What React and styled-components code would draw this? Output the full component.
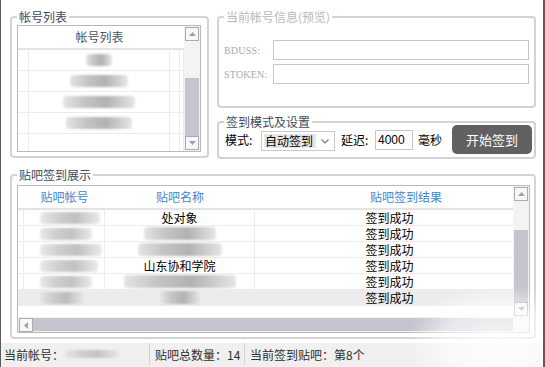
import React from "react"
import styled, { createGlobalStyle } from "styled-components"

const GlobalStyle = createGlobalStyle`
  html, body {
    margin: 0;
    padding: 0;
    background: #fff;
  }
  * {
    box-sizing: border-box;
  }
`

const Window = styled.div`
  position: relative;
  width: 545px;
  height: 367px;
  overflow: hidden;
  background: #fff;
  border-left: 1px solid #5c5c5c;
  border-right: 2px solid #5c5c5c;
  font-family: "Noto Sans CJK SC", "Liberation Sans", sans-serif;
  font-size: 12px;
  color: #111;
`

const Body = styled.div`
  padding: 10px 0 0 9px;
`

const TopRow = styled.div`
  display: flex;
  align-items: flex-start;
`

const RightCol = styled.div`
  display: flex;
  flex-direction: column;
  gap: 7px;
  margin-left: 8px;
`

const Group = styled.fieldset`
  margin: ${p => p.$mt || 0}px 0 0 0;
  padding: 0;
  min-width: 0;
  width: ${p => p.$w}px;
  height: ${p => p.$h}px;
  border: 2px solid #d3d3d3;
  border-radius: 4px;
`

const Legend = styled.legend`
  margin-left: 5px;
  padding: 0 2px;
  font-size: 12px;
  line-height: 14px;
  color: ${p => (p.$disabled ? "#b9b9b9" : "#3d4a5c")};
`

const ListView = styled.div`
  display: grid;
  grid-template-columns: 1fr 16px;
  grid-template-rows: ${p => (p.$hScroll ? "1fr 15px" : "1fr")};
  width: ${p => p.$w}px;
  height: ${p => p.$h}px;
  margin: ${p => p.$mt}px 0 0 5px;
  border: 1px solid #b9b9b9;
  background: #fff;
  overflow: hidden;
`

const TableArea = styled.div`
  overflow: hidden;
  min-width: 0;
`

const HeaderRow = styled.div`
  display: grid;
  grid-template-columns: ${p => p.$cols};
  height: 24px;
  border-bottom: 2px solid #e3e3e3;
`

const HeaderCell = styled.div`
  text-align: center;
  line-height: 22px;
  white-space: nowrap;
  color: ${p => (p.$blue ? "#4286d2" : "#4a5566")};
`

const Row = styled.div`
  display: grid;
  grid-template-columns: ${p => p.$cols};
  height: ${p => p.$h}px;
  border-bottom: 1px solid #ececec;
  background: ${p => (p.$active ? "#ececec" : "transparent")};
`

const Cell = styled.div`
  display: flex;
  align-items: center;
  justify-content: ${p => (p.$left ? "flex-start" : "center")};
  padding-left: ${p => p.$pl || 0}px;
  padding-right: ${p => p.$pr || 0}px;
  border-right: 1px solid #ececec;
  white-space: nowrap;
  overflow: hidden;
  line-height: 15px;
  color: #000;
`

const Blob = styled.span`
  display: inline-block;
  width: ${p => p.$w}px;
  height: ${p => p.$h || 11}px;
  border-radius: 4px;
  background: linear-gradient(90deg, #e4e4e4 0%, #c4c4c4 30%, #b2b2b2 60%, #e6e6e6 100%);
  filter: blur(1.2px);
  opacity: ${p => p.$o || 1};
`

const VScroll = styled.div`
  display: flex;
  flex-direction: column;
  padding: 1px 1px;
  background: #f2f2f2;
`

const HScroll = styled.div`
  display: flex;
  padding: 1px 0 1px 1px;
  background: #f2f2f2;
`

const Corner = styled.div`
  background: #f2f2f2;
`

const ArrowBtn = styled.div`
  flex: none;
  width: 14px;
  height: 14px;
  border: 1px solid #acacac;
  background: #f7f7f7;
  display: flex;
  align-items: center;
  justify-content: center;
`

const TrackGap = styled.div`
  flex: none;
  height: ${p => p.$h}px;
  background-image: linear-gradient(45deg, #f7f7f7 25%, transparent 25%, transparent 75%, #f7f7f7 75%);
  background-size: 2px 2px;
`

const Thumb = styled.div`
  flex: 1;
  background: #c5c5cf;
`

const InfoBody = styled.div`
  display: flex;
  flex-direction: column;
  gap: 4px;
  padding: 16px 0 0 5px;
`

const InfoRow = styled.div`
  display: flex;
  align-items: center;
  height: 20px;
`

const SerifLabel = styled.span`
  width: 49px;
  font-family: "Liberation Serif", "DejaVu Serif", serif;
  font-size: 10px;
  letter-spacing: 0.2px;
  color: #aaaaaa;
`

const TextBox = styled.div`
  width: ${p => p.$w}px;
  height: ${p => p.$h || 20}px;
  border: 1px solid #c6c6c6;
  background: #fff;
  padding-left: 2px;
  font-family: "Liberation Sans", sans-serif;
  font-size: 12px;
  line-height: ${p => (p.$h || 20) - 2}px;
  color: #000;
`

const SettingsRow = styled.div`
  display: flex;
  align-items: center;
  height: 29px;
  margin-top: -4px;
  padding-left: 6px;
`

const Label = styled.span`
  width: ${p => p.$w}px;
  margin-left: ${p => p.$ml || 0}px;
  flex: none;
  color: #000;
`

const Select = styled.div`
  display: flex;
  width: 74px;
  height: 20px;
  margin-top: 3px;
  border: 1px solid #c9c9c9;
  background: #fff;
`

const SelectValue = styled.div`
  flex: 1;
  margin: 2px 0 2px 2px;
  background: #e6e6e6;
  line-height: 14px;
  padding-left: 1px;
  color: #000;
`

const SelectArrow = styled.div`
  width: 18px;
  display: flex;
  align-items: center;
  justify-content: center;
`

const StartButton = styled.button`
  width: 80px;
  height: 29px;
  border: none;
  border-radius: 5px;
  background: #616161;
  color: #fff;
  font-family: "Noto Sans CJK SC", sans-serif;
  font-size: 13px;
  padding: 0;
`

const StatusBar = styled.div`
  display: flex;
  height: 24px;
  margin-top: 4px;
  background: #f0f0f0;
  color: #2e2e2e;
  font-size: 12px;
`

const StatusItem = styled.div`
  display: flex;
  align-items: center;
  width: ${p => (p.$w ? `${p.$w}px` : "auto")};
  padding-left: ${p => p.$pl}px;
  height: 22px;
  border-right: ${p => (p.$sep ? "1px solid #d4d4d4" : "none")};
  white-space: nowrap;
`

const Watermark = styled.div`
  position: absolute;
  right: 0;
  bottom: 0;
  width: 130px;
  height: 80px;
  background: radial-gradient(ellipse at 65% 70%, rgba(255,255,255,0.85) 0%, rgba(255,255,255,0.6) 45%, rgba(255,255,255,0) 75%);
  pointer-events: none;
`

const Tri = ({ dir }) => {
  const pts = {
    up: "0,4 3.5,0 7,4",
    down: "0,0 3.5,4 7,0",
    left: "4,0 0,3.5 4,7",
  }[dir]
  const vb = dir === "left" ? "0 0 4 7" : "0 0 7 4"
  return (
    <svg width={dir === "left" ? 4 : 7} height={dir === "left" ? 7 : 4} viewBox={vb}>
      <polygon points={pts} fill="#a2a2a2" />
    </svg>
  )
}

const Chevron = () => (
  <svg width="8" height="5" viewBox="0 0 8 5">
    <path d="M0.5 0.5 L4 4 L7.5 0.5" fill="none" stroke="#7a7a7a" strokeWidth="1.2" />
  </svg>
)

const accountCols = "11px 141px 10px 1fr"
const accounts = [26, 58, 72, 66, 0]

const tiebaCols = "6px 81px 150px 302px"
const tieba = [
  { acc: 60, name: "处对象" },
  { acc: 52, blur: 72 },
  { acc: 62, blur: 84 },
  { acc: 58, name: "山东协和学院" },
  { acc: 52, blur: 112 },
  { acc: 44, blur: 40, active: true },
]

export default function App() {
  return (
    <Window>
      <GlobalStyle />
      <Body>
        <TopRow>
          <Group $w={199} $h={148}>
            <Legend>帐号列表</Legend>
            <ListView $w={184} $h={127} $mt={1}>
              <TableArea>
                <HeaderRow $cols={accountCols}>
                  <HeaderCell />
                  <HeaderCell>帐号列表</HeaderCell>
                  <HeaderCell />
                  <HeaderCell />
                </HeaderRow>
                {accounts.map((w, i) => (
                  <Row key={i} $cols={accountCols} $h={21}>
                    <Cell />
                    <Cell>{w > 0 && <Blob $w={w} $h={12} />}</Cell>
                    <Cell />
                    <Cell />
                  </Row>
                ))}
              </TableArea>
              <VScroll>
                <ArrowBtn><Tri dir="up" /></ArrowBtn>
                <TrackGap $h={37} />
                <Thumb />
                <ArrowBtn><Tri dir="down" /></ArrowBtn>
              </VScroll>
            </ListView>
          </Group>

          <RightCol>
            <Group $w={319} $h={98}>
              <Legend $disabled>当前帐号信息(预览)</Legend>
              <InfoBody>
                <InfoRow>
                  <SerifLabel>BDUSS:</SerifLabel>
                  <TextBox $w={256} />
                </InfoRow>
                <InfoRow>
                  <SerifLabel>STOKEN:</SerifLabel>
                  <TextBox $w={256} />
                </InfoRow>
              </InfoBody>
            </Group>

            <Group $w={319} $h={44}>
              <Legend>签到模式及设置</Legend>
              <SettingsRow>
                <Label $w={36}>模式:</Label>
                <Select>
                  <SelectValue>自动签到</SelectValue>
                  <SelectArrow><Chevron /></SelectArrow>
                </Select>
                <Label $w={34} $ml={6}>延迟:</Label>
                <TextBox $w={38} $h={20}>4000</TextBox>
                <Label $w={34} $ml={5}>毫秒</Label>
                <StartButton>开始签到</StartButton>
              </SettingsRow>
            </Group>
          </RightCol>
        </TopRow>

        <Group $w={526} $h={171} $mt={9}>
          <Legend>贴吧签到展示</Legend>
          <ListView $w={513} $h={148} $mt={3} $hScroll>
            <TableArea>
              <HeaderRow $cols={tiebaCols}>
                <HeaderCell />
                <HeaderCell $blue>贴吧帐号</HeaderCell>
                <HeaderCell $blue>贴吧名称</HeaderCell>
                <HeaderCell $blue>贴吧签到结果</HeaderCell>
              </HeaderRow>
              {tieba.map((r, i) => (
                <Row key={i} $cols={tiebaCols} $h={16} $active={r.active}>
                  <Cell />
                  <Cell $left $pl={16}><Blob $w={r.acc} $h={12} $o={0.8} /></Cell>
                  <Cell>{r.name ? r.name : <Blob $w={r.blur} $h={13} />}</Cell>
                  <Cell $pr={32}>签到成功</Cell>
                </Row>
              ))}
            </TableArea>
            <VScroll>
              <ArrowBtn><Tri dir="up" /></ArrowBtn>
              <TrackGap $h={29} />
              <Thumb />
              <ArrowBtn><Tri dir="down" /></ArrowBtn>
            </VScroll>
            <HScroll>
              <ArrowBtn><Tri dir="left" /></ArrowBtn>
              <Thumb />
            </HScroll>
            <Corner />
          </ListView>
        </Group>
      </Body>

      <StatusBar>
        <StatusItem $w={149} $pl={3} $sep>
          当前帐号：<Blob $w={56} $h={8} $o={0.7} />
        </StatusItem>
        <StatusItem $w={95} $pl={5} $sep>贴吧总数量：14</StatusItem>
        <StatusItem $pl={5}>当前签到贴吧：第8个</StatusItem>
      </StatusBar>
      <Watermark />
    </Window>
  )
}
